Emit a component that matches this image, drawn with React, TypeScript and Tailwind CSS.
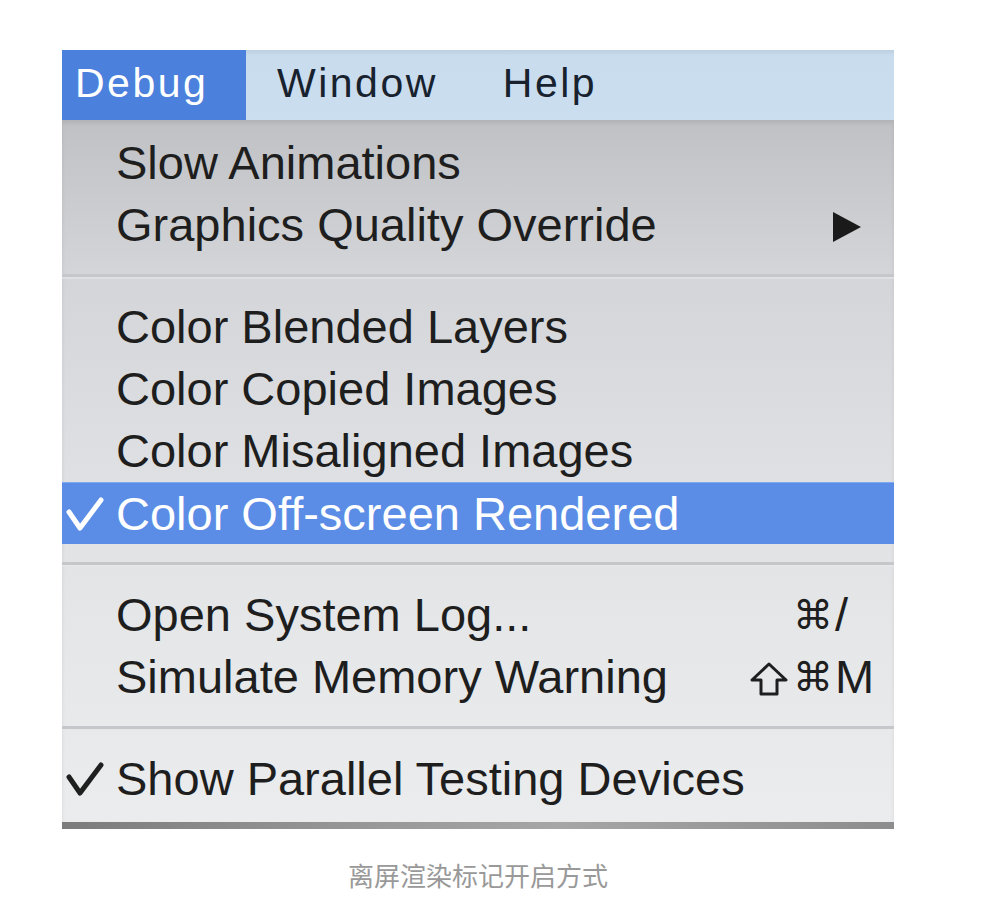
import React from "react";

function Check({ white }: { white?: boolean }) {
  return (
    <svg width="38" height="34" viewBox="0 0 38 34" className="ml-[4px]">
      <path
        d="M3 15 L14 31 L35 3"
        fill="none"
        stroke={white ? "#ffffff" : "#1f1f1f"}
        strokeWidth="5"
        strokeLinecap="round"
        strokeLinejoin="round"
      />
    </svg>
  );
}

function Row({
  label,
  checked,
  selected,
  right,
}: {
  label: string;
  checked?: boolean;
  selected?: boolean;
  right?: React.ReactNode;
}) {
  return (
    <div
      className={
        selected
          ? "h-[62px] flex items-center bg-[#5b8de6] border-t border-[#7ea8ef] text-white"
          : "h-[62px] flex items-center text-[#1e1e1e]"
      }
    >
      <div className="w-[54px] shrink-0 flex items-center">{checked ? <Check white={selected} /> : null}</div>
      <div className="flex-1 text-[47px] leading-[62px] whitespace-nowrap">{label}</div>
      {right}
    </div>
  );
}

function Separator() {
  return (
    <div className="h-[40px] flex flex-col justify-center">
      <div className="h-[3px] bg-[#c5c7ca]" />
      <div className="h-[2px] bg-[#e6e7e9] opacity-60" />
    </div>
  );
}

function Shortcut({ mods, keyName }: { mods: React.ReactNode; keyName: string }) {
  return (
    <div className="flex items-center mr-[17px] text-[#1e1e1e]">
      <div className="flex items-center justify-end gap-[4px]">{mods}</div>
      <div className="w-[44px] pl-[2px] text-[47px] leading-[62px]">{keyName}</div>
    </div>
  );
}

function Cmd() {
  return (
    <span className="text-[40px] leading-[62px] font-['DejaVu_Sans',sans-serif]">⌘</span>
  );
}

function Shift() {
  return (
    <svg width="40" height="36" viewBox="0 0 40 36" className="mt-[4px]">
      <path
        d="M20 3 L37 19 L28 19 L28 33 L12 33 L12 19 L3 19 Z"
        fill="none"
        stroke="#1e1e1e"
        strokeWidth="3"
        strokeLinejoin="round"
      />
    </svg>
  );
}

export default function App() {
  return (
    <div className="w-full min-h-[914px] bg-white pt-[50px]">
      <div className="ml-[62px] w-[832px]">
        <div className="w-[832px] h-[779px] flex flex-col overflow-hidden font-['Liberation_Sans',Arial,sans-serif]">
          {/* menu bar */}
          <div className="h-[70px] shrink-0 flex items-stretch bg-[linear-gradient(180deg,#bccfe0_0%,#c8dcee_8%,#cadef0_100%)] text-[#18222e] text-[41px] tracking-[2.5px]">
            <div className="w-[184px] pl-[13px] flex items-center bg-[#4b80dc] text-white">
              <span className="mt-[-3px]">Debug</span>
            </div>
            <div className="pl-[31px] flex items-center">
              <span className="mt-[-3px]">Window</span>
            </div>
            <div className="pl-[65px] flex items-center">
              <span className="mt-[-3px]">Help</span>
            </div>
          </div>

          {/* menu body */}
          <div className="flex-1 flex flex-col pt-[12px] pb-[12px] bg-[linear-gradient(180deg,#c0c1c4_0%,#d3d5d8_22%,#dcdee1_45%,#e4e6e8_70%,#ebeced_100%)] shadow-[inset_0_3px_4px_rgba(0,0,0,0.08)]">
            <Row label="Slow Animations" />
            <Row
              label="Graphics Quality Override"
              right={
                <svg width="30" height="32" viewBox="0 0 30 32" className="mr-[32px] mt-[4px]">
                  <polygon points="1,1 29,16 1,31" fill="#1a1a1a" />
                </svg>
              }
            />
            <Separator />
            <Row label="Color Blended Layers" />
            <Row label="Color Copied Images" />
            <Row label="Color Misaligned Images" />
            <Row label="Color Off-screen Rendered" checked selected />
            <Separator />
            <Row label="Open System Log..." right={<Shortcut mods={<Cmd />} keyName="/" />} />
            <Row
              label="Simulate Memory Warning"
              right={
                <Shortcut
                  mods={
                    <>
                      <Shift />
                      <Cmd />
                    </>
                  }
                  keyName="M"
                />
              }
            />
            <Separator />
            <Row label="Show Parallel Testing Devices" checked />
          </div>

          {/* bottom band */}
          <div className="h-[7px] shrink-0 bg-[linear-gradient(90deg,#7c7c7c_0%,#9a9a9a_40%,#a6a6a6_60%,#8d8d8d_100%)]" />
        </div>

        <p className="mt-[33px] text-center text-[26px] leading-[26px] text-[#999999] font-['Noto_Sans_CJK_SC',sans-serif]">
          离屏渲染标记开启方式
        </p>
      </div>
    </div>
  );
}
